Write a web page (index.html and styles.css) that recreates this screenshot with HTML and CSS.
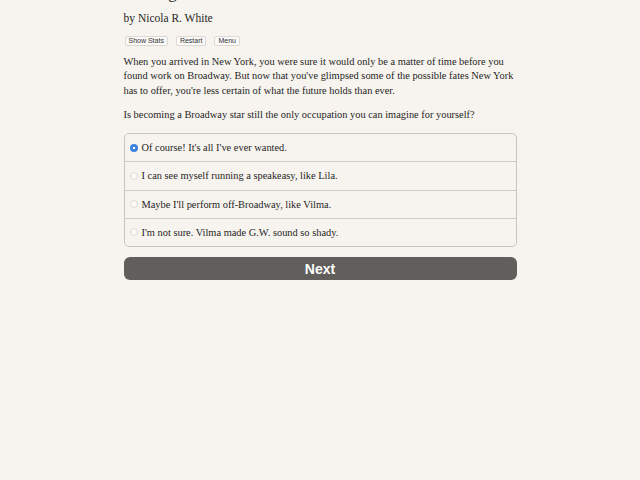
FILE: index.html
```html
<!DOCTYPE html>
<html lang="en">
<head>
<meta charset="utf-8">
<title>Jazz Age</title>
<link rel="stylesheet" href="styles.css">
</head>
<body>
<main class="page">
  <h1 class="title">Jazz Age</h1>
  <p class="author">by Nicola R. White</p>
  <div class="toolbar">
    <button class="tool-btn" type="button">Show Stats</button>
    <button class="tool-btn" type="button">Restart</button>
    <button class="tool-btn" type="button">Menu</button>
  </div>
  <p class="story">When you arrived in New York, you were sure it would only be a matter of time before you found work on Broadway. But now that you've glimpsed some of the possible fates New York has to offer, you're less certain of what the future holds than ever.</p>
  <p class="story question">Is becoming a Broadway star still the only occupation you can imagine for yourself?</p>
  <form class="choice-form">
    <div class="choices">
      <label class="choice"><input type="radio" name="choice" checked><span>Of course! It's all I've ever wanted.</span></label>
      <label class="choice"><input type="radio" name="choice"><span>I can see myself running a speakeasy, like Lila.</span></label>
      <label class="choice"><input type="radio" name="choice"><span>Maybe I'll perform off-Broadway, like Vilma.</span></label>
      <label class="choice"><input type="radio" name="choice"><span>I'm not sure. Vilma made G.W. sound so shady.</span></label>
    </div>
    <button class="next" type="button">Next</button>
  </form>
</main>
</body>
</html>
```

FILE: styles.css
```css
html, body {
  margin: 0;
  background: #f7f4f0;
}

body {
  color: #262523;
  font-family: "Liberation Serif", "Times New Roman", serif;
}

.page {
  width: 393px;
  margin: 0 auto;
}

/* The page is scrolled a little, so only the bottom of the title shows */
.title {
  margin: -17px 0 0;
  font-size: 17px;
  font-weight: normal;
  line-height: 20px;
}

.author {
  margin: 7.5px 0 0;
  font-size: 11.5px;
  line-height: 15px;
}

.toolbar {
  display: flex;
  gap: 8px;
  margin-top: 10.5px;
  padding-left: 1px;
}

.tool-btn {
  font-family: "Liberation Sans", Arial, sans-serif;
  font-size: 7px;
  line-height: 8px;
  color: #333;
  background: #fbfaf8;
  border: 1px solid #dcd9d4;
  border-radius: 2px;
  padding: 0 3px;
  height: 10px;
}

.story {
  margin: 8.75px 0 0;
  font-size: 10.4px;
  line-height: 14.5px;
}

.story.question {
  margin-top: 9.5px;
}

.choice-form {
  margin-top: 10.75px;
}

.choices {
  border: 1px solid #c9c6c1;
  border-radius: 5px;
  display: flex;
  flex-direction: column;
}

.choice {
  display: flex;
  align-items: center;
  height: 27.25px;
  padding-left: 5px;
  font-size: 10.4px;
  border-top: 1px solid #cfccc7;
}

.choice:first-child {
  border-top: none;
}

.choice input {
  appearance: none;
  -webkit-appearance: none;
  margin: 0 4px 0 0;
  width: 8px;
  height: 8px;
  border-radius: 50%;
  border: 1px solid #dedbd6;
  background: #faf9f7;
  box-sizing: border-box;
}

.choice input:checked {
  border: none;
  background: radial-gradient(circle, #fff 0 1.3px, #3b82e0 1.6px);
}

.next {
  display: block;
  width: 100%;
  margin-top: 10px;
  height: 23px;
  border: none;
  border-radius: 6px;
  background: #605f5c;
  color: #fff;
  font-family: "Liberation Sans", Arial, sans-serif;
  font-weight: bold;
  font-size: 14px;
}
```
